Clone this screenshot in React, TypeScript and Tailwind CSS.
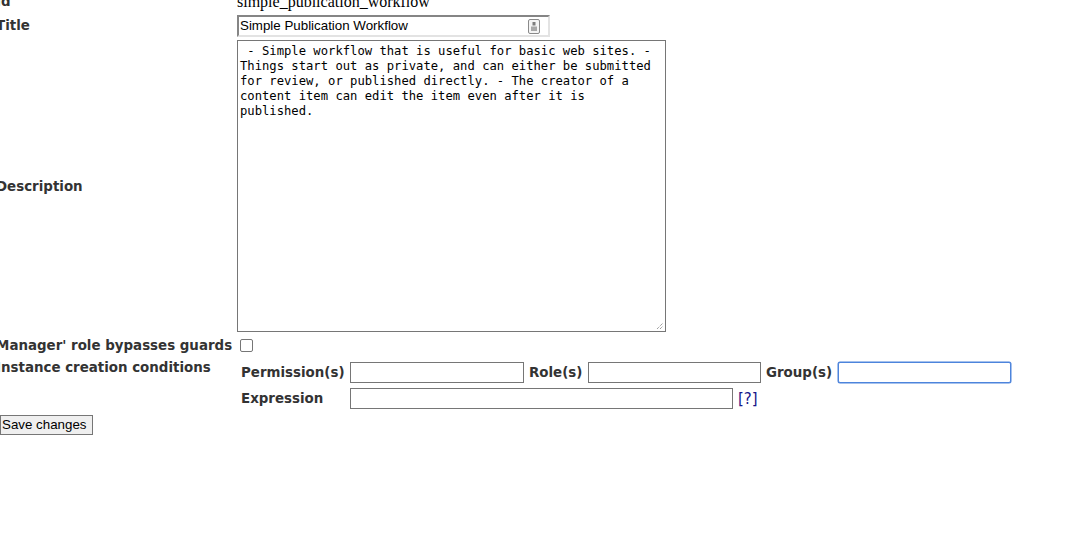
import React from "react";

const label = "font-['DejaVu_Sans',Verdana,sans-serif] font-bold text-[13.4px] text-[#333333] leading-[16px] whitespace-nowrap";
const inputBox = "h-[21px] border border-[#767676] bg-white";

export default function App() {
  return (
    <div className="w-[1068px] h-[538px] bg-white overflow-hidden relative">
      <div className="flex flex-col mt-[-9px]">
        {/* Id */}
        <div className="flex h-[22px] items-center">
          <div className={`${label} w-[241px] ml-[-4px]`}>Id</div>
          <div className="font-['Liberation_Serif',serif] text-[16px] text-black leading-[18px]">simple_publication_workflow</div>
        </div>
        {/* Title */}
        <div className="flex h-[22px] items-center mt-[2px]">
          <div className={`${label} w-[241px] ml-[-4px]`}>Title</div>
          <div className="w-[313px] h-[22px] border-2 border-t-[#858585] border-l-[#858585] border-b-[#e3e3e3] border-r-[#e3e3e3] bg-white flex items-center justify-between pl-[1px] pr-[8px]">
            <span className="font-['Liberation_Sans',Arial,sans-serif] text-[13.33px] text-black leading-[16px]">Simple Publication Workflow</span>
            <svg width="12" height="15" viewBox="0 0 12 15">
              <rect x="0.5" y="0.5" width="11" height="14" rx="1.5" fill="#f4f4f4" stroke="#8a8a8a" />
              <rect x="4.5" y="3" width="3" height="3.5" fill="#7d7d7d" />
              <rect x="3" y="7.5" width="6" height="4.5" fill="#a8a8a8" />
            </svg>
          </div>
        </div>
        {/* Description */}
        <div className="flex h-[292px] items-center mt-[3px]">
          <div className={`${label} w-[241px] ml-[-4px] pt-[2px]`}>Description</div>
          <div className="relative w-[429px] h-[292px] border border-[#767676] bg-white pt-[3px] pl-[2px]">
            <div className="font-['DejaVu_Sans_Mono',monospace] text-[12.2px] leading-[15px] text-black whitespace-pre w-[420px]">
{` - Simple workflow that is useful for basic web sites. -
Things start out as private, and can either be submitted
for review, or published directly. - The creator of a
content item can edit the item even after it is
published.`}
            </div>
            <svg className="absolute right-[1px] bottom-[1px]" width="8" height="8" viewBox="0 0 8 8">
              <line x1="1" y1="7" x2="7" y2="1" stroke="#777" strokeWidth="1" strokeDasharray="1 1" />
              <line x1="4" y1="7" x2="7" y2="4" stroke="#777" strokeWidth="1" strokeDasharray="1 1" />
            </svg>
          </div>
        </div>
        {/* Manager */}
        <div className="flex h-[15px] items-center mt-[6px]">
          <div className={`${label} w-[245px] ml-[-8px]`}>'Manager' role bypasses guards</div>
          <div className="ml-[3px] w-[13px] h-[13px] border border-[#767676] rounded-[2px] bg-white"></div>
        </div>
        {/* Instance creation conditions */}
        <div className="flex mt-[7px]">
          <div className={`${label} w-[241px] ml-[-4px]`}>Instance creation conditions</div>
          <div className="flex flex-col pt-[2px]">
            <div className="flex items-center h-[21px]">
              <div className={`${label} w-[109px] ml-[4px]`}>Permission(s)</div>
              <div className={`${inputBox} w-[174px]`}></div>
              <div className={`${label} w-[59px] ml-[5px]`}>Role(s)</div>
              <div className={`${inputBox} w-[173px]`}></div>
              <div className={`${label} w-[72px] ml-[5px]`}>Group(s)</div>
              <div className="h-[21px] w-[173px] border border-[#4d84dc] rounded-[2px] bg-white shadow-[0_0_0_0.5px_#4d84dc]"></div>
            </div>
            <div className="flex items-center h-[21px] mt-[5px]">
              <div className={`${label} w-[109px] ml-[4px]`}>Expression</div>
              <div className={`${inputBox} w-[383px]`}></div>
              <span className="ml-[5px] font-['DejaVu_Sans',Verdana,sans-serif] text-[15px] leading-[18px] text-[#16168a]">[?]</span>
            </div>
          </div>
        </div>
        {/* Save */}
        <div className="mt-[2px]">
          <button className="h-[20px] w-[93px] border border-[#767676] bg-[#efefef] font-['Liberation_Sans',Arial,sans-serif] text-[13.33px] leading-[16px] text-black text-left pl-[1px]">Save changes</button>
        </div>
      </div>
    </div>
  );
}
